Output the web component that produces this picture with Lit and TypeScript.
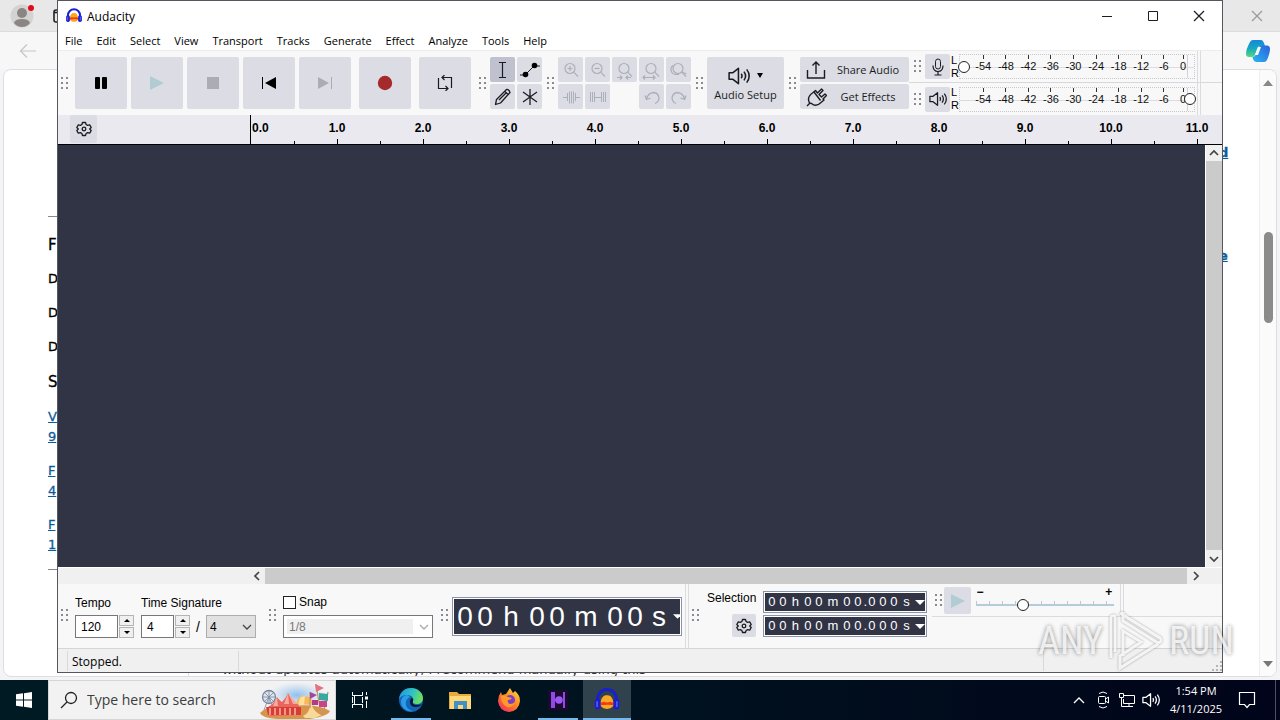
import { LitElement, html, css, svg } from "lit";
import { customElement, property } from "lit/decorators.js";
import { classMap } from "lit/directives/class-map.js";

const icon = (w: number, h: number, body: unknown) =>
  html`<svg width=${w} height=${h} viewBox="0 0 ${w} ${h}" fill="none" stroke="currentColor" aria-hidden="true">${body}</svg>`;

const logo = (s: number) => html`<svg width=${s} height=${s} viewBox="0 0 24 24" aria-hidden="true">
  <path d="M4 15V11a8 8 0 0 1 16 0v4" fill="none" stroke="#1a1ed0" stroke-width="2.600"/>
  <path d="M6 15.500C7 9 10 7.500 12 8c3-.5 5 2 6 7.500C17 21 7 21 6 15.500z" fill="#f7a925"/>
  <path d="M6 14.500l3-1 3 .6 3-.6 3 1-.5 2-4.500-.4-6.500.4z" fill="#f33b12"/>
  <rect x="1.500" y="11" width="5" height="9" rx="2.200" fill="#1a1ed0"/><rect x="17.500" y="11" width="5" height="9" rx="2.200" fill="#1a1ed0"/>
  <path d="M3.500 13v5M20.500 13v5" stroke="#6a78f0"/></svg>`;

const gear = icon(16, 16, svg`<g stroke-width="1.300"><path d="M6.500 1.500h3l.6 2 1.500.9 2.100-.5 1.500 2.600L13.700 8l1.500 1.500-1.500 2.600-2.100-.5-1.500.9-.6 2h-3l-.6-2-1.500-.9-2.100.5L.8 9.500 2.300 8 .8 6.500l1.500-2.600 2.100.5 1.500-.9z" stroke-linejoin="round"/><circle cx="8" cy="8" r="1.800"/></g>`);
const speaker = (w: number) => html`<svg width=${w} height=${w} viewBox="0 0 20 20" fill="none" stroke="currentColor" stroke-width="1.400" aria-hidden="true"><path d="M1 7h3.500L9.500 3v14l-5-4H1z" stroke-linejoin="round"/><path d="M12 8q1.500 2 0 4M14.500 6q3 4 0 8M17 4q4.500 6 0 12"/></svg>`;
const lens = (extra: unknown) => icon(20, 20, svg`<g stroke-width="1.200"><circle cx="9" cy="8.500" r="5"/><path d="M12.700 12.200 17 16.500"/>${extra}</g>`);

@customElement("drag-grip")
export class DragGrip extends LitElement {
  static styles = css`:host{display:block;width:8px;height:13px;flex:none;color:#8a8a90}svg{display:block}`;
  render() {
    return html`<svg width="8" height="13" viewBox="0 0 8 13" fill="currentColor">
      ${[0, 5, 10].map((y) => svg`<rect x="0" y=${y} width="2" height="2"/><rect x="5" y=${y} width="2" height="2"/>`)}</svg>`;
  }
}

@customElement("level-meter")
export class LevelMeter extends LitElement {
  @property() name = "";
  @property({ type: Number }) level = 0;
  static styles = css`
    :host{display:flex;align-items:center;height:27px;flex:1;min-width:0}
    .lr{width:9px;font:11px/13px "Liberation Sans",sans-serif;padding-left:1px;box-sizing:border-box}
    .lr span{display:block}
    .box{position:relative;flex:1;height:25px;border:1px dotted #c9c9cd;box-sizing:border-box;padding:0 3px 0 12px;background:linear-gradient(#dcdce0,#dcdce0) 0 12px/100% 1px no-repeat,linear-gradient(#d2d2d6,#d2d2d6) right 6px top 0/1px 100% no-repeat,#f8f8f8}
    .scale{display:flex}
    .scale span{flex:1;text-align:center;font:11px/13px "Liberation Sans",sans-serif;padding-top:5px;background:linear-gradient(#333,#333) center top/1px 4px no-repeat;color:#111}
    .scale .end{flex:none;width:16px}
    input{position:absolute;inset:0 -2px;width:calc(100% + 4px);height:100%;margin:0;appearance:none;background:none}
    input::-webkit-slider-thumb{appearance:none;width:12px;height:12px;border-radius:50%;border:1px solid #222;background:#fff;box-sizing:border-box}
  `;
  render() {
    return html`<div class="lr"><span>L</span><span>R</span></div>
      <div class="box"><div class="scale">${[-54, -48, -42, -36, -30, -24, -18, -12, -6].map((n) => html`<span>${n}</span>`)}<span class="end">0</span></div>
      <input type="range" aria-label=${this.name} min="0" max="100" .value=${String(this.level)}></div>`;
  }
}

@customElement("time-readout")
export class TimeReadout extends LitElement {
  @property() value = "";
  @property({ type: Boolean, reflect: true }) large = false;
  static styles = css`
    :host{display:block;border:1px solid #8b93a6;padding:1px;background:#fff;box-sizing:border-box;height:22px;width:164px}
    .in{height:100%;background:#313445;color:#fff;display:flex;align-items:center;padding-left:1px;box-sizing:border-box;font:13px/18px "Liberation Sans",sans-serif;overflow:hidden}
    span{width:11px;text-align:center;flex:none}
    .u{width:14px}.m{width:17px}.dot{width:3px}
    button{appearance:none;border:0;background:none;color:inherit;padding:0;margin-left:1px;width:12px;height:16px;display:flex;align-items:center;justify-content:center}
    :host([large]){width:230px;height:39px}
    :host([large]) .in{font-size:28px;line-height:35px}
    :host([large]) span{width:20px}
    :host([large]) .u{width:32px}:host([large]) .m{width:38px}:host([large]) .s{width:28px}
    :host([large]) button{margin:0;width:9px}
  `;
  render() {
    return html`<div class="in">${[...this.value].map((c) => html`<span class=${classMap({ u: c === "h" || c === "s", s: c === "s", m: c === "m", dot: c === "." })}>${c}</span>`)}
      <button aria-label="Format"><svg width="10" height="5" viewBox="0 0 10 5"><path d="M0 0h10L5 5z" fill="#fff"/></svg></button></div>`;
  }
}

@customElement("web-browser")
export class WebBrowser extends LitElement {
  static styles = css`
    :host{display:flex;flex-direction:column;background:#f4f4f7;font-family:"DejaVu Sans",sans-serif;overflow:hidden}
    button{appearance:none;border:0;background:none;padding:0;display:flex}
    svg{display:block}
    .tabs{height:32px;flex:none;background:#e8e8e8;display:flex;align-items:center;padding:0 16px 0 10px;box-sizing:border-box;border-bottom:1px solid #dcdcdc}
    .tabs .tab{margin-left:15px;flex:1}
    .nav{height:37px;flex:none;background:#f7f7f7;display:flex;align-items:center;justify-content:space-between;padding:0 9px 0 19px}
    .page{flex:1;min-height:0;margin:0 3px 3px;background:#fff;border:1px solid #dedee2;border-radius:8px;display:flex;box-sizing:border-box;overflow:hidden}
    .left{width:184px;padding-left:44px;box-sizing:border-box;font-size:13px;line-height:20px}
    hr{margin:146px 0 18px;border:0;border-top:1px solid #888}
    h2{font-size:15px;line-height:20px;font-weight:400;margin:0 0 15px;-webkit-text-stroke:.3px}
    h3{font-size:13px;line-height:18px;font-weight:400;margin:0 0 16px;-webkit-text-stroke:.3px}
    p{margin:0 0 14px}
    a{color:#0b5c9c;display:block;width:max-content;-webkit-text-stroke:.3px}
    .foot{margin:12px 0 0}
    .mid{flex:1;display:flex;flex-direction:column;justify-content:flex-end}
    .mid p{margin:0;font-size:13px;line-height:12px;padding-left:33px;color:#333;border-left:1px solid #ddd}
    .right{width:40px;font-size:13px;font-weight:700;line-height:20px;padding-top:73px}
    .right a{margin-bottom:83px}
    .bar{width:17px;background:#fbfbfb;display:flex;flex-direction:column;align-items:center;padding:10px 0 9px;box-sizing:border-box;border-left:1px solid #eee}
    .thumb{width:9px;height:91px;border-radius:5px;background:#8b8b8b;margin:146px 0 auto}
  `;
  render() {
    const pair = (a: string, b: string) => html`<p><a href="#">${a}</a><a href="#">${b}</a></p>`;
    return html`
      <div class="tabs">
        <button aria-label="Profile"><svg width="26" height="26" viewBox="0 0 26 26"><circle cx="12" cy="13" r="11.500" fill="#d5d3d1"/><circle cx="12" cy="10" r="5" fill="#8b8683"/><path d="M4 20q1-4 8-4t8 4q-3 4-8 4t-8-4z" fill="#8b8683"/><circle cx="21" cy="5" r="3" fill="#e00b1c"/></svg></button>
        <div class="tab"><svg width="14" height="16" viewBox="0 0 14 16" fill="none" stroke="#222" stroke-width="1.600"><rect x="3" y="2" width="12" height="12" rx="2"/><path d="M3 4.500h12"/></svg></div>
        <button aria-label="Close browser"><svg width="14" height="14" viewBox="0 0 14 14" stroke="#999" stroke-width="1.200"><path d="M2 2l10 10M12 2 2 12"/></svg></button>
      </div>
      <div class="nav">
        <button aria-label="Back"><svg width="18" height="16" viewBox="0 0 18 16" fill="none" stroke="#c5c5c5" stroke-width="1.200"><path d="M17 8H1.500M8 1.500 1.500 8 8 14.500"/></svg></button>
        <button aria-label="Copilot"><svg width="26" height="26" viewBox="0 0 26 26"><defs><linearGradient id="c1" x1="0" y1="0" x2="0" y2="1"><stop stop-color="#1686dc"/><stop offset=".5" stop-color="#15a9bf"/><stop offset="1" stop-color="#57d87a"/></linearGradient><linearGradient id="c2" x1="1" y1="0" x2="0" y2="1"><stop stop-color="#2b62dc"/><stop offset="1" stop-color="#29b4f4"/></linearGradient></defs>
          <path d="M8 2h8q2 0 3 3l1 3h-5q-2 0-3 3l-2 6q-1 2-3 2H4q-3 0-3-3 0-5 4-12 1-2 3-2z" fill="url(#c1)"/><path d="M19 24h-8q-2 0-3-3l-.5-2Q10 19 11 16l2-6q1-2.500 4-2.500h5q3 0 3 3.500 0 4-3 11-1 2-3 2z" fill="url(#c2)"/><path d="M13 9h3l-3 8h-3z" fill="#f4fbff"/></svg></button>
      </div>
      <div class="page">
        <div class="left"><hr><h2>F</h2><h3>D</h3><h3>D</h3><h3>D</h3><h2>S</h2>${pair("V", "9")}${pair("F", "4")}${pair("F", "1")}<hr class="foot"></div>
        <div class="mid"><p>without updates automatically, I recommend manually using this</p></div>
        <div class="right"><a href="#">d</a><a href="#">e</a></div>
        <div class="bar"><svg width="10" height="6" viewBox="0 0 10 6"><path d="M0 6h10L5 0z" fill="#888"/></svg><div class="thumb"></div><svg width="10" height="6" viewBox="0 0 10 6"><path d="M0 0h10L5 6z" fill="#777"/></svg></div>
      </div>`;
  }
}

@customElement("audacity-window")
export class AudacityWindow extends LitElement {
  static styles = css`
    :host{display:flex;flex-direction:column;border:1px solid #55565e;box-sizing:border-box;background:#f8f8f8;color:#000;font-family:"Open Sans","Noto Sans",sans-serif;font-size:11px}
    svg{display:block}
    button{appearance:none;border:0;padding:0;margin:0;font:inherit;color:#1b1c22;background:none;display:flex;align-items:center;justify-content:center}
    .title{height:30px;flex:none;background:#fff;display:flex;align-items:center;padding-left:7px;font-size:12px}
    h1{font:inherit;margin:0 auto 0 4px}
    .title button{width:46px;height:29px}
    .menu{height:20px;flex:none;background:#fff;display:flex;gap:14px;padding-left:7px;align-items:center;border-bottom:1px solid #ececec;box-sizing:border-box}
    .menu button{color:#000}
    .tools{height:64px;flex:none;display:flex;align-items:center;padding-left:3px;box-sizing:border-box}
    .tools>drag-grip{margin-right:5px}
    .btn,.cell{background:#dcdde4;border-radius:2px}
    .transport{display:flex;gap:4px;margin:0 8px 0 1px}
    .transport .btn{width:52px;height:52px}
    .transport .wide{margin-left:4px}
    .pair{display:grid;grid-template-columns:repeat(2,25px);grid-auto-rows:25px;gap:2px;margin-right:5px;margin-left:-2px}
    .edit{display:grid;grid-template-columns:repeat(5,25px);grid-auto-rows:25px;gap:2px;margin:0 5px 0 -2px}
    .edit .cell{color:#acafba}
    .edit .jump{grid-column:4}
    .on{background:#bfc1cf}
    .setup{width:77px;height:52px;flex-direction:column;margin:0 5px 0 -2px}
    .setup span{display:flex;align-items:center;gap:7px}
    .share{display:grid;grid-template-rows:25px 25px;gap:2px;width:109px;margin-left:-2px}
    .share .btn{justify-content:flex-start;padding-left:5px}
    .share .btn b{flex:1;font-weight:400}
    .meters{flex:1;align-self:stretch;display:grid;grid-template-rows:32px 32px}
    .meter{display:flex;align-items:center;border-bottom:1px solid #d9d9dc;padding:0 0 0 5px}
    .meter:last-child{border:0}
    .meter .cell{width:25px;height:25px;margin:0 0 0 3px}
    .meter .tail{width:24px;margin-left:2px;align-self:stretch;border-left:1px solid #dcdce0;display:flex}
    .meter .tail::before{content:"";width:2px;border-right:1px solid #dcdce0}
    .ruler{height:30px;flex:none;background:#e9e9ef;border-bottom:1px solid #000;box-sizing:border-box;display:flex;overflow:hidden}
    .ruler .head{width:192px;flex:none;padding-left:12px;box-sizing:border-box}
    .ruler .btn{width:27px;height:28px}
    .scale{flex:1;border-left:1px solid #000;display:flex;overflow:hidden;font:700 12px/27px "Liberation Sans",sans-serif}
    .scale span{flex:none;width:86px;text-align:center;background:linear-gradient(#000,#000) 43px 100%/1px 5px no-repeat,linear-gradient(#000,#000) 0 100%/1px 3px no-repeat}
    .scale .zero{width:43px;text-align:left;background:none;padding-left:1px;box-sizing:border-box}
    .work{flex:1;min-height:0;display:flex}
    .canvas{flex:1;background:#313445}
    .vbar{width:17px;background:#f0f0f0;border-left:1px solid #fff;box-sizing:border-box;display:flex;flex-direction:column}
    .vbar button{width:16px;height:16px}
    .vbar div{flex:1;background:#cbcbcb;margin-bottom:1px}
    .hbar{height:17px;flex:none;background:#f0f0f0;border-top:1px solid #fff;box-sizing:border-box;display:flex;padding:0 17px 0 191px}
    .hbar button{width:16px}
    .hbar button:last-child{width:18px}
    .hbar div{flex:1;background:#cbcbcb}
    .bottom{height:64px;flex:none;display:flex;padding-left:3px;font:12px/16px "Liberation Sans",sans-serif;border-bottom:1px solid #d5d5d5}
    .bottom>drag-grip{margin:25px 6px 0 0}
    .field{display:flex;flex-direction:column;gap:4px;padding-top:11px}
    .row{display:flex;align-items:center;height:23px}
    input[type=text],select{font:12px/16px "Liberation Sans",sans-serif;border:1px solid #77777b;background:#fff;color:#000;border-radius:0;box-sizing:border-box;height:23px;padding:0 0 0 5px;margin:0}
    .spin{width:15px;height:23px;display:flex;flex-direction:column;gap:1px;margin-left:1px}
    .spin button{flex:1;border:1px solid #b4b4b4;background:#f0f0f0}
    .tempo{width:43px}.beats{width:33px}
    select{appearance:none}
    .sel{display:grid;align-items:center}
    .sel>*{grid-area:1/1}
    .sel svg{justify-self:end;margin-right:4px;pointer-events:none}
    .den{width:50px}
    select.den{background:#e1e1e1;border-color:#adadad;padding-left:3px}
    select.grid{width:150px;color:#77777b;opacity:1;background:linear-gradient(#f0f0f0,#f0f0f0) 3px 3px/126px 15px no-repeat,#fff}
    .slash{width:16px;text-align:center;font-size:14px}
    .sig{margin:0 13px 0 7px}
    .snap{margin-right:8px;gap:5px;padding-top:10px}
    .check{display:flex;align-items:center;height:16px;gap:3px}
    .check input{appearance:none;width:13px;height:13px;border:1px solid #222;background:#fff;margin:0}
    .clock{margin:13px 3px 0 -3px;flex:none}
    .rail{width:4px;border:1px solid #dcdce0;border-width:0 1px;box-sizing:border-box;margin-right:3px}
    .selbox{display:flex;flex-direction:column;align-items:flex-end;gap:8px;padding-top:6px;margin:0 7px 0 1px}
    .selbox .btn{width:24px;height:23px}
    .times{display:flex;flex-direction:column;gap:2px;padding-top:7px}
    .speed{flex:1;height:32px;margin-left:5px;border-bottom:1px solid #dcdce0;display:flex;align-items:center}
    .speed .btn{width:27px;height:27px;margin:1px 5px 0 1px}
    .speed drag-grip{margin-left:3px}
    .slider{width:138px;padding-bottom:2px;display:grid;grid-template:11px 13px/1fr 1fr;font:700 12px/11px "Liberation Sans",sans-serif}
    .slider b:nth-child(2){text-align:right;padding-right:2px}
    .slider input{grid-column:1/3;appearance:none;margin:0;width:100%;height:13px;background:linear-gradient(#b4cbd9,#b4cbd9) 0 6px/100% 2px no-repeat,repeating-linear-gradient(90deg,#b4cbd9 0 1px,transparent 1px 13px) 0 3px/100% 3px no-repeat}
    .slider input::-webkit-slider-thumb{appearance:none;width:12px;height:12px;box-sizing:border-box;border-radius:50%;border:1px solid #222;background:#fff}
    .speed .rail{align-self:stretch;margin:0 0 0 6px}
    .status{height:23px;flex:none;background:#f0f0f0;display:flex;align-items:center;font-size:12px}
    .status div{border-left:1px solid #d9d9d9;height:20px;line-height:22px;padding-left:4px;box-sizing:border-box}
    .status div:nth-child(1){width:171px;margin-left:9px}
    .status div:nth-child(2){flex:1}
    .status div:nth-child(3){width:179px;display:flex;justify-content:flex-end;align-items:flex-end}
  `;
  render() {
    const chev = (d: string) => icon(10, 10, svg`<path d=${d} stroke="#444" stroke-width="1.700"/>`);
    const drop = (c: string) => icon(10, 6, svg`<path d="M1 1l4 4 4-4" stroke=${c} stroke-width="1.300"/>`);
    const spin = html`<div class="spin"><button aria-label="Increase"><svg width="6" height="3"><path d="M0 3h6L3 0z"/></svg></button><button aria-label="Decrease"><svg width="6" height="3"><path d="M0 0h6L3 3z"/></svg></button></div>`;
    return html`
      <div class="title">${logo(18)}<h1>Audacity</h1>
        <button aria-label="Minimize">${icon(12, 12, svg`<path d="M1 6.500h10"/>`)}</button>
        <button aria-label="Maximize">${icon(12, 12, svg`<path d="M1.500 1.500h9v9h-9z"/>`)}</button>
        <button aria-label="Close">${icon(12, 12, svg`<path d="M1 1l10 10M11 1 1 11" stroke-width="1.200"/>`)}</button></div>
      <nav class="menu">${["File", "Edit", "Select", "View", "Transport", "Tracks", "Generate", "Effect", "Analyze", "Tools", "Help"].map((m) => html`<button>${m}</button>`)}</nav>
      <div class="tools">
        <drag-grip></drag-grip>
        <div class="transport">
          <button class="btn" aria-label="Pause">${icon(16, 16, svg`<path d="M2 3q0-1 1-1h3q1 0 1 1v10q0 1-1 1H3q-1 0-1-1zM9 3q0-1 1-1h3q1 0 1 1v10q0 1-1 1h-3q-1 0-1-1z" fill="#000" stroke="none"/>`)}</button>
          <button class="btn" aria-label="Play">${icon(16, 16, svg`<path d="M1 1v14l14-7z" fill="#b2ccd4" stroke="none"/>`)}</button>
          <button class="btn" aria-label="Stop">${icon(16, 16, svg`<path d="M2 2h12v12H2z" fill="#abadb5" stroke="none"/>`)}</button>
          <button class="btn" aria-label="Skip to start">${icon(16, 16, svg`<path d="M15 2v12L4 8z" fill="#000" stroke="none"/><path d="M1.500 2v12" stroke="#000"/>`)}</button>
          <button class="btn" aria-label="Skip to end">${icon(16, 16, svg`<path d="M1 2v12l11-6z" fill="#abadb5" stroke="none"/><path d="M14.500 2v12" stroke="#abadb5"/>`)}</button>
          <button class="btn wide" aria-label="Record">${icon(16, 16, svg`<circle cx="8" cy="8" r="7.200" fill="#a52a2c" stroke="none"/>`)}</button>
          <button class="btn wide" aria-label="Loop">${icon(16, 16, svg`<path d="M1.500 3v10.500H11M14.500 13V2.500H5M7.500 0 5 2.500 7.500 5M8.500 11l2.500 2.500L8.500 16" stroke-width="1.200"/>`)}</button>
        </div>
        <drag-grip></drag-grip>
        <div class="pair">
          <button class="cell on" aria-label="Selection tool">${icon(20, 20, svg`<path d="M6 2.500h7M9.500 2.500v15M6 17.500h7" stroke-width="1.200"/>`)}</button>
          <button class="cell" aria-label="Envelope tool">${icon(22, 20, svg`<path d="M1 15h5l9-9h6"/><circle cx="6.500" cy="14.500" r="2.800" fill="#000" stroke="none"/><circle cx="15.500" cy="5.500" r="2.800" fill="#000" stroke="none"/>`)}</button>
          <button class="cell" aria-label="Draw tool">${icon(20, 20, svg`<path d="M2.500 17.500l1-5L13.500 2.500q2.500-.5 3.500 3L7.500 16zM12 4.500 15.500 8M6 13l7-7" stroke-width="1.300" stroke-linejoin="round"/>`)}</button>
          <button class="cell" aria-label="Multi-tool">${icon(20, 20, svg`<path d="M10 2v16M3 5l14 10M17 5 3 15" stroke-width="1.300"/>`)}</button>
        </div>
        <drag-grip></drag-grip>
        <div class="edit">
          <button class="cell" aria-label="Zoom in">${lens(svg`<path d="M6.500 8.500h5M9 6v5"/>`)}</button>
          <button class="cell" aria-label="Zoom out">${lens(svg`<path d="M6.500 8.500h5"/>`)}</button>
          <button class="cell" aria-label="Fit selection">${lens(svg`<path d="M2 17.500h5M11 17.500h5M5 15.500l2 2-2 2M13 15.500l-2 2 2 2"/>`)}</button>
          <button class="cell" aria-label="Fit project">${lens(svg`<path d="M1 17.500h12M3 15.500l-2 2 2 2M11 15.500l2 2-2 2"/>`)}</button>
          <button class="cell" aria-label="Zoom toggle">${lens(svg`<path d="M7 14.500a5 5 0 0 1-3-9M7 14.500l3 0M13 12l4.500 2"/>`)}</button>
          <button class="cell" aria-label="Trim audio">${icon(20, 20, svg`<path d="M2 10.500h4M15 10.500h4M6.500 6v8M8.500 4.500v12M10.500 4.500v12M12.500 4.500v12M14.500 6v8"/>`)}</button>
          <button class="cell" aria-label="Silence audio">${icon(20, 20, svg`<path d="M2.500 5v10M4.500 5v10M6.500 5v10M6.500 10.500h7M13.500 5v10M15.500 5v10M17.500 5v10"/>`)}</button>
          <button class="cell jump" aria-label="Undo">${icon(20, 20, svg`<path d="M3 8.500l1.500 4 4-1.500M4.500 12q1.500-6 7-6.500 5 .5 5.500 5.500-.3 4-4 5.500" stroke-width="1.300"/>`)}</button>
          <button class="cell" aria-label="Redo">${icon(20, 20, svg`<path d="M17 8.500l-1.500 4-4-1.500M15.500 12q-1.500-6-7-6.500-5 .5-5.500 5.500.3 4 4 5.500" stroke-width="1.300"/>`)}</button>
        </div>
        <drag-grip></drag-grip>
        <button class="btn setup"><span>${speaker(22)}<svg width="6" height="6"><path d="M0 0h6L3 5z"/></svg></span>Audio Setup</button>
        <drag-grip></drag-grip>
        <div class="share">
          <button class="btn">${icon(22, 20, svg`<path d="M2.500 10v8h17v-8M11 14V2M7.500 5.500 11 2l3.500 3.500" stroke-width="1.400"/>`)}<b>Share Audio</b></button>
          <button class="btn">${icon(22, 20, svg`<path d="M2 19l3-3M4.500 16q-3-6 3-10l3-2.500 2 2.500 4-4 1.500 1.500-4 4 2.500 2.500 3.500-3 1.500 1.500-3.500 3.500 1 1-3 2.500q-5 5-9.500 1zM9 5l6.500 8.500" stroke-width="1.400" stroke-linejoin="round"/>`)}<b>Get Effects</b></button>
        </div>
        <div class="meters">
          <div class="meter"><drag-grip></drag-grip><button class="cell" aria-label="Record meter">${icon(16, 18, svg`<rect x="5.500" y="1" width="5" height="10" rx="2.500"/><path d="M3 7.500q0 6 5 6t5-6M8 13.500v3M4.500 17h7" stroke-width="1.200"/>`)}</button><level-meter name="Recording level" level="0"></level-meter><div class="tail"></div></div>
          <div class="meter"><drag-grip></drag-grip><button class="cell" aria-label="Playback meter">${speaker(18)}</button><level-meter name="Playback level" level="100"></level-meter><div class="tail"></div></div>
        </div>
      </div>
      <div class="ruler"><div class="head"><button class="btn" aria-label="Timeline options">${gear}</button></div>
        <div class="scale"><span class="zero">0.0</span>${Array.from({ length: 11 }, (_, i) => html`<span>${i + 1}.0</span>`)}</div></div>
      <div class="work"><div class="canvas"></div><div class="vbar"><button aria-label="Scroll up">${chev("M1 7l4-4 4 4")}</button><div></div><button aria-label="Scroll down">${chev("M1 3l4 4 4-4")}</button></div></div>
      <div class="hbar"><button aria-label="Scroll left">${chev("M7 1 3 5l4 4")}</button><div></div><button aria-label="Scroll right">${chev("M3 1l4 4-4 4")}</button></div>
      <div class="bottom">
        <drag-grip></drag-grip>
        <div class="field"><label for="tempo">Tempo</label><div class="row"><input id="tempo" class="tempo" type="text" value="120">${spin}</div></div>
        <div class="field sig"><label for="beats">Time Signature</label><div class="row"><input id="beats" class="beats" type="text" value="4">${spin}<span class="slash">/</span><div class="sel"><select class="den" aria-label="Beat unit"><option>4</option></select>${drop("#444")}</div></div></div>
        <drag-grip></drag-grip>
        <div class="field snap"><label class="check"><input type="checkbox">Snap</label><div class="sel"><select class="grid" aria-label="Snap to" disabled><option>1/8</option></select>${drop("#aaa")}</div></div>
        <drag-grip></drag-grip>
        <time-readout class="clock" large value="00h00m00s"></time-readout>
        <div class="rail"></div>
        <drag-grip></drag-grip>
        <div class="selbox"><span>Selection</span><button class="btn" aria-label="Selection options">${gear}</button></div>
        <div class="times"><time-readout value="00h00m00.000s"></time-readout><time-readout value="00h00m00.000s"></time-readout></div>
        <div class="speed"><drag-grip></drag-grip><button class="btn" aria-label="Play at speed">${icon(16, 16, svg`<path d="M1 1v14l14-7z" fill="#b2ccd4" stroke="none"/>`)}</button>
          <div class="slider"><b>−</b><b>+</b><input type="range" aria-label="Playback speed" min="0" max="100" value="32"></div><div class="rail"></div></div>
      </div>
      <div class="status"><div>Stopped.</div><div></div><div>${icon(10, 10, svg`<path d="M8 0h2v2H8zM4 4h2v2H4zM8 4h2v2H8zM0 8h2v2H0zM4 8h2v2H4zM8 8h2v2H8z" fill="#b5b5b5" stroke="none"/>`)}</div></div>`;
  }
}

@customElement("task-bar")
export class TaskBar extends LitElement {
  static styles = css`
    :host{display:flex;background:linear-gradient(90deg,#001a23,#00121f 50%,#01041a);color:#fff;font-family:"Open Sans","Noto Sans",sans-serif}
    svg{display:block}
    button{appearance:none;border:0;background:none;padding:0;color:inherit;width:48px;display:flex;align-items:center;justify-content:center;font:inherit}
    .search{width:288px;background:#f2f2f2;border:1px solid #d6d6d6;box-sizing:border-box;display:flex;align-items:center;color:#222;padding-left:11px}
    .search input{border:0;background:none;outline:0;flex:1;min-width:0;font:14px/20px "Open Sans","Noto Sans",sans-serif;padding:0 0 0 9px}
    .search input::placeholder{color:#3d3d3d;opacity:1}
    .apps{display:flex;gap:1px;margin:0 auto 0 3px}
    .apps .run{background:linear-gradient(#76b9ed,#76b9ed) center bottom/40px 2px no-repeat}
    .apps .active{background:linear-gradient(#76b9ed,#76b9ed) center bottom/48px 2px no-repeat,#30424b}
    .tray{display:flex;align-items:center}
    .tray button{width:24px}
    .tray .clock{display:block;text-align:center;width:66px;font-size:11px;line-height:18px}
    .tray .note{width:36px}
    .tray .peek{width:11px;align-self:stretch;border-right:1px solid #4a5060;box-sizing:border-box;margin-right:4px}
  `;
  render() {
    return html`
      <button aria-label="Start"><svg width="16" height="16" fill="#fff"><path d="M0 2.300 7 1.300V7.500H0zM8 1.200 16 0v7.500H8zM0 8.500h7v6.200l-7-1zM8 8.500h8V16l-8-1.200z"/></svg></button>
      <div class="search">${icon(18, 18, svg`<circle cx="11" cy="7" r="5.500" stroke-width="1.300"/><path d="M7 11 1 17" stroke-width="1.300"/>`)}
        <input type="text" aria-label="Search" placeholder="Type here to search">
        <svg width="76" height="37" viewBox="0 0 76 37"><defs><radialGradient id="sky"><stop stop-color="#8fc0ee"/><stop offset="1" stop-color="#a9cdee" stop-opacity="0"/></radialGradient></defs>
          <ellipse cx="38" cy="13" rx="28" ry="13" fill="url(#sky)"/><path d="M1 31q8-9 30-7 28-3 40 5-2 5-20 8H18Q3 36 1 31z" fill="#d9944c"/>
          <circle cx="10" cy="15" r="6.500" fill="#dfe5ee" stroke="#7786a0" stroke-width="1.300"/><path d="M10 8.500v13M3.500 15h13M5.500 10.500l9 9M14.500 10.500l-9 9M10 15 5 28M10 15l5 13" stroke="#7786a0" stroke-width=".8"/>
          <path d="M9 25q6-3 9-10 3 4 5 5 4-4 6-9 3 6 7 9l4 3v10l-29 1z" fill="#e8665b"/><path d="M18 15l-4 9h5zM29 11l-4 11h5zM29 11l5 11h4z" fill="#f8aaa0"/>
          <path d="M7 25h35v8H9z" fill="#d63c38"/><path d="M11 26v7M16 26v7M21 26v7M26 26v7M31 26v7M36 26v7" stroke="#ffb29c" stroke-width="1.500"/>
          <path d="M37 22q2-9 9-8 8 1 9 9z" fill="#f4b95c"/><path d="M42 15q-3 4-2 8h5l1-9z" fill="#ffe09c"/><path d="M44 34q6-2 8-13 3 10 11 12l-7 3H46z" fill="#f7d998"/>
          <path d="M57 2l5 31M69 10l-5 22M51 10v16" stroke="#c69668" stroke-width="1.300"/><path d="M56 2l9 4-8 4z" fill="#e5727c"/><path d="M51 10l7 3-7 4z" fill="#a2459f"/><path d="M60 11l9 1v7l-9-1z" fill="#37aaa0"/><path d="M60 19h8v6h-8z" fill="#c8458a"/><path d="M53 18h6v5h-6z" fill="#b03c88"/></svg></div>
      <button aria-label="Task view">${icon(16, 16, svg`<path d="M.5 0v3.500h10V0M.5 16v-3.500h10V16M.5 5v6M10.500 5v6M.5 3.500h10M.5 12.500h10M2.500 3.500v9M14.500 0v3M14.500 9v7"/><path d="M13 4.500h3v3h-3z" fill="#fff" stroke="none"/>`)}</button>
      <div class="apps">
        <button class="run" aria-label="Edge"><svg width="26" height="26" viewBox="0 0 26 26"><defs><linearGradient id="e" x1="0" y1="0" x2="1" y2=".3"><stop stop-color="#1f92de"/><stop offset=".6" stop-color="#30c3c4"/><stop offset="1" stop-color="#6ade62"/></linearGradient></defs><circle cx="13" cy="13" r="12" fill="#1266b8"/><path d="M1 12C2 4 8 1 13 1c7 0 12 5 12 10 0 4-3 6-6 6-3 0-5-1-4-3 1-4-2-6-6-6-4 0-7 2-8 4z" fill="url(#e)"/><path d="M9 8c-6 1-7 7-5 11s7 6 11 5c-6-1-8-6-7-10 1-2 2-3 4-4-1-1-2-2-3-2z" fill="#2b9be8"/><path d="M15 14c-1 2 0 4 4 4q3 0 5-1-2 3-6 3-6 0-6-5c0-2 1-4 2-4q2 1 1 3z" fill="#04182b"/></svg></button>
        <button aria-label="File Explorer"><svg width="24" height="20" viewBox="0 0 24 20"><path d="M1 2h8l2 2h12v15H1z" fill="#e8a93d"/><path d="M2 6h21v13H2z" fill="#ffd978"/><path d="M6 19v-8h13v8h-4v-4h-5v4z" fill="#4390c8"/></svg></button>
        <button aria-label="Firefox"><svg width="26" height="26" viewBox="0 0 26 26"><defs><linearGradient id="f" x1="1" y1="0" x2=".2" y2="1"><stop stop-color="#ffe244"/><stop offset=".5" stop-color="#ff8a22"/><stop offset="1" stop-color="#f22c62"/></linearGradient></defs><path d="M5 5l1 3 4-1 4-6 3 5 2-2q5 4 5 10-1 10-11 11Q3 24 2 14q0-5 3-9z" fill="url(#f)"/><circle cx="14" cy="13" r="5" fill="#7a3fc4"/><path d="M5 9q4-1 7 1l4 1q-1 2-4 2-1 3 2 4 3 0 5-2-2 6-8 5-6-3-6-11z" fill="#ff9a28"/></svg></button>
        <button class="run" aria-label="H"><svg width="20" height="20" viewBox="0 0 20 20"><path d="M0 0h20v20H0z" fill="#1b0a2e"/><path d="M3 2h4v16H3zM15 2h2v16h-2z" fill="#8f4ae8"/><path d="M7 9h3v2H7z" fill="#8f4ae8"/><circle cx="11" cy="10" r="3.800" fill="#9d56f5"/></svg></button>
        <button class="active" aria-label="Audacity">${logo(28)}</button>
      </div>
      <div class="tray">
        <button aria-label="Hidden icons">${icon(12, 8, svg`<path d="M1 7l5-5 5 5" stroke-width="1.300"/>`)}</button>
        <button aria-label="Meet now">${icon(16, 18, svg`<rect x="3.500" y="5.500" width="7" height="7" rx="1"/><path d="M10.500 8l3-2v6l-3-2M4 2.500q4-3 8 0M4 15.500q4 3 8 0"/>`)}</button>
        <button aria-label="Network">${icon(18, 16, svg`<path d="M6 3.500h10.500v8H5.500V7M11 11.500v3M7 14.500h8M1.500 1.500h4v4h-4zM3.500 5.500v9H7"/>`)}</button>
        <button aria-label="Volume">${speaker(18)}</button>
        <button class="clock">1:54 PM<br>4/11/2025</button>
        <button class="note" aria-label="Notifications">${icon(18, 18, svg`<path d="M1.500 1.500h15v12h-5l-2.500 3-2.500-3h-5z" stroke-width="1.200"/>`)}</button>
        <div class="peek"></div>
      </div>`;
  }
}

@customElement("app-root")
export class AppRoot extends LitElement {
  static styles = css`
    :host{display:grid;grid-template-rows:minmax(0,1fr) 40px;height:100vh;overflow:hidden}
    .desk{position:relative;display:grid;min-height:0}
    audacity-window{position:absolute;inset:0 57px 7px 57px}
    .mark{position:absolute;right:46px;bottom:8px;display:flex;align-items:center;gap:4px;font:38px/60px "Liberation Sans Narrow","Roboto Condensed","Open Sans Condensed","Liberation Sans",sans-serif;color:rgba(255,255,255,.8);text-shadow:0 0 4px rgba(0,0,0,.45);pointer-events:none}
    .mark svg{display:block;filter:drop-shadow(0 0 1px rgba(0,0,0,.4))}
  `;
  render() {
    return html`<div class="desk"><web-browser></web-browser><audacity-window></audacity-window>
      <div class="mark"><span>ANY</span><svg width="58" height="62" viewBox="0 0 58 62" fill="none" stroke="#fff" stroke-opacity=".85" stroke-width="3"><path d="M4 48V8q0-3 4-2v36M13 3l40 25q3 3-2 5L16 11V2M16 46V21l18 11L13 46v12l38-24"/></svg><span>RUN</span></div></div>
      <task-bar></task-bar>`;
  }
}
